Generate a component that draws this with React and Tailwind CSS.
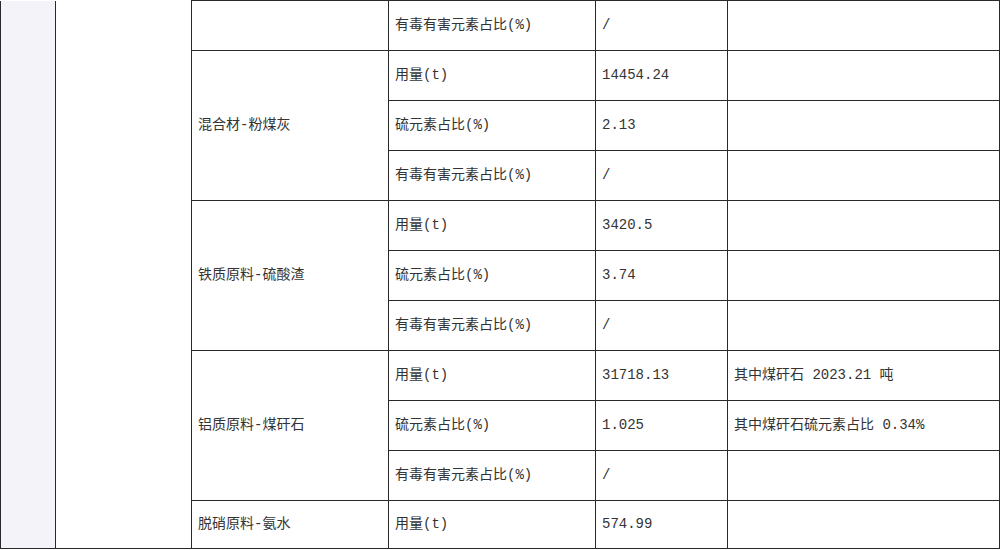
import React from 'react';

const font = { fontFamily: '"Liberation Mono", "Noto Sans CJK SC", monospace' };

const groups = [
  {
    name: '混合材-粉煤灰',
    rows: [
      ['用量(t)', '14454.24', ''],
      ['硫元素占比(%)', '2.13', ''],
      ['有毒有害元素占比(%)', '/', ''],
    ],
  },
  {
    name: '铁质原料-硫酸渣',
    rows: [
      ['用量(t)', '3420.5', ''],
      ['硫元素占比(%)', '3.74', ''],
      ['有毒有害元素占比(%)', '/', ''],
    ],
  },
  {
    name: '铝质原料-煤矸石',
    rows: [
      ['用量(t)', '31718.13', '其中煤矸石 2023.21 吨'],
      ['硫元素占比(%)', '1.025', '其中煤矸石硫元素占比 0.34%'],
      ['有毒有害元素占比(%)', '/', ''],
    ],
  },
  {
    name: '脱硝原料-氨水',
    rows: [['用量(t)', '574.99', '']],
  },
];

const cell = 'border border-[#2a2a2a] px-[6px] align-middle text-[14px] text-[#333] whitespace-nowrap';

export default function App() {
  return (
    <div className="w-[1000px] h-[550px] bg-white overflow-hidden" style={font}>
      <table className="table-fixed border-collapse w-[999px]">
        <colgroup>
          <col className="w-[55px]" />
          <col className="w-[136px]" />
          <col className="w-[197px]" />
          <col className="w-[207px]" />
          <col className="w-[132px]" />
          <col className="w-[272px]" />
        </colgroup>
        <tbody>
          <tr className="h-[50px]">
            <td rowSpan={11} className="border-l border-r border-b border-[#2a2a2a] bg-[#f4f3fa]"></td>
            <td rowSpan={11} className="border-r border-b border-[#2a2a2a] bg-white"></td>
            <td className={cell}></td>
            <td className={cell}>有毒有害元素占比(%)</td>
            <td className={cell}>/</td>
            <td className={cell}></td>
          </tr>
          {groups.map((g, gi) =>
            g.rows.map((r, i) => (
              <tr key={g.name + i} className={gi === groups.length - 1 ? 'h-[48px]' : 'h-[50px]'}>
                {i === 0 && (
                  <td rowSpan={g.rows.length} className={cell}>
                    {g.name}
                  </td>
                )}
                <td className={cell}>{r[0]}</td>
                <td className={cell}>{r[1]}</td>
                <td className={cell}>{r[2]}</td>
              </tr>
            ))
          )}
        </tbody>
      </table>
    </div>
  );
}
